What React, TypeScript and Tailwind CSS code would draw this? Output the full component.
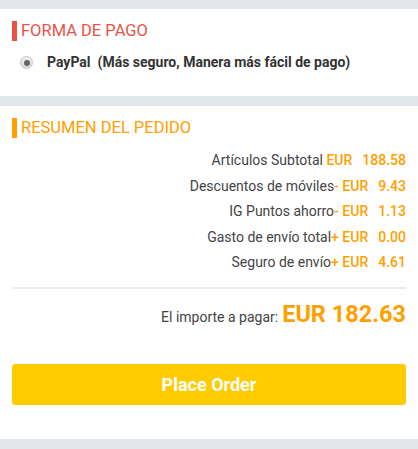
const font = { fontFamily: "Roboto, 'Liberation Sans', sans-serif" };

type Line = { label: string; sign: string; amount: string };

const lines: Line[] = [
  { label: "Artículos Subtotal", sign: "", amount: "188.58" },
  { label: "Descuentos de móviles", sign: "-", amount: "9.43" },
  { label: "IG Puntos ahorro", sign: "-", amount: "1.13" },
  { label: "Gasto de envío total", sign: "+", amount: "0.00" },
  { label: "Seguro de envío", sign: "+", amount: "4.61" },
];

function SectionTitle({ text, color }: { text: string; color: "red" | "orange" }) {
  const bar = color === "red" ? "bg-[#e8534a]" : "bg-[#ffa000]";
  const fg = color === "red" ? "text-[#e8534a]" : "text-[#ffa000]";
  return (
    <div className="flex h-[20px] items-center pl-[12px]">
      <div className={`h-[20px] w-[5px] ${bar}`} />
      <div className={`ml-[4px] text-[16.5px] leading-none ${fg}`}>{text}</div>
    </div>
  );
}

export default function App() {
  return (
    <div className="min-h-[449px] w-full bg-[#e1e7eb] pt-[9px] pb-[10px]" style={font}>
      <section className="h-[87px] bg-white pt-[12px]">
        <SectionTitle text="FORMA DE PAGO" color="red" />
        <div className="mt-[11px] flex items-center pl-[20px]">
          <div className="flex h-[13px] w-[13px] items-center justify-center rounded-full border border-[#c4c4c4] bg-gradient-to-b from-[#f2f2f2] to-[#d9d9d9]">
            <div className="h-[6px] w-[6px] rounded-full bg-[#666]" />
          </div>
          <div className="ml-[14px] text-[14px] font-bold text-[#333]">
            PayPal&nbsp;&nbsp;(Más seguro, Manera más fácil de pago)
          </div>
        </div>
      </section>

      <section className="mt-[10px] h-[333px] bg-white pt-[12px]">
        <SectionTitle text="RESUMEN DEL PEDIDO" color="orange" />

        <div className="mt-[10px] px-[12px]">
          {lines.map((l) => (
            <div key={l.label} className="flex h-[25.5px] items-center justify-end text-[14px]">
              <span className="text-[#444]">{l.label}</span>
              <span className="whitespace-pre font-medium text-[#ffa000]">
                {l.sign ? `${l.sign} EUR` : " EUR"}
              </span>
              <span className="ml-[10px] font-medium text-[#ffa000]">{l.amount}</span>
            </div>
          ))}
        </div>

        <div className="mx-[12px] mt-[11px] h-[2px] bg-[#ececec]" />

        <div className="flex h-[52px] items-center justify-end px-[12px]">
          <span className="mt-[5px] text-[14px] text-[#444]">El importe a pagar:</span>
          <span className="ml-[4px] text-[23.5px] font-bold text-[#ffa000]">EUR 182.63</span>
        </div>

        <div className="px-[12px] pt-[23px]">
          <button className="flex h-[41px] w-full items-center justify-center rounded-[3px] bg-[#ffcc00] text-[18px] font-bold text-white">
            Place Order
          </button>
        </div>
      </section>
    </div>
  );
}
